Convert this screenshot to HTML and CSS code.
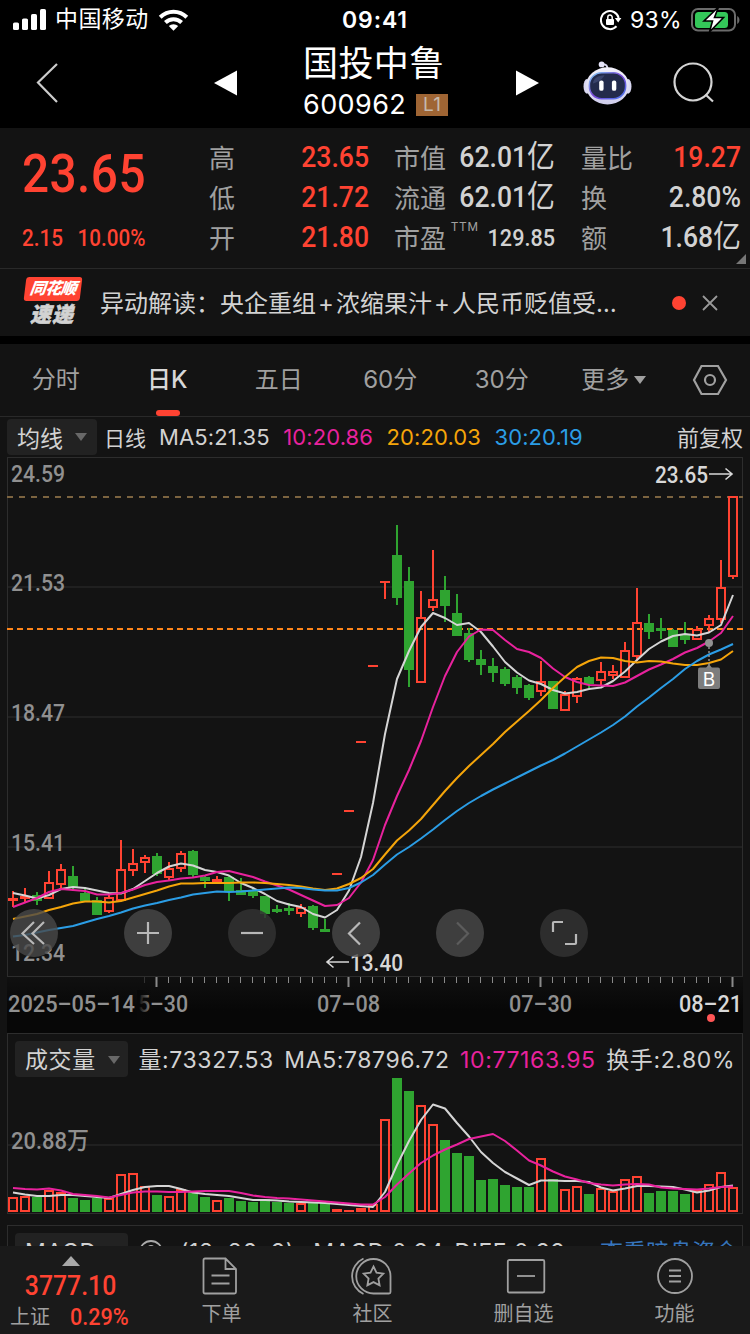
FILE: index.html
```
<!DOCTYPE html>
<html lang="zh-CN">
<head>
    <meta charset="UTF-8">
    <meta name="viewport" content="width=device-width, initial-scale=1.0">
    <title>国投中鲁 600962</title>
    <link rel="stylesheet" href="styles.css">
</head>
<body>
    <div class="status-bar">
        <div class="status-left">
            <svg width="34" height="22" viewBox="0 0 34 22" fill="#fff">
                <rect x="0" y="13.5" width="6" height="7.5" rx="1.6"/>
                <rect x="9" y="9.5" width="6" height="11.5" rx="1.6"/>
                <rect x="18" y="5" width="6" height="16" rx="1.6"/>
                <rect x="27" y="0" width="6" height="21" rx="1.6"/>
            </svg>
            <span class="carrier">中国移动</span>
            <svg width="31" height="22" viewBox="0 0 31 22" fill="none" stroke="#fff" stroke-width="4">
                <path d="M2.2 8.2a19 19 0 0 1 26.6 0"/>
                <path d="M7.4 13.5a11.6 11.6 0 0 1 16.2 0"/>
                <path d="M10.8 17.1a6.8 6.8 0 0 1 9.4 0L15.5 21.8z" fill="#fff" stroke="none"/>
            </svg>
        </div>
        <div class="time">09:41</div>
        <div class="status-right">
            <svg width="22" height="22" viewBox="0 0 22 22" fill="none" stroke="#fff" stroke-width="2">
                <path d="M16.5 17.3a9 9 0 1 1 2.2-8.3"/>
                <path d="M14.8 9h6.600l-3.200 4.500z" fill="#fff" stroke="none"/>
                <rect x="6" y="10" width="8" height="6" rx="1" fill="#fff" stroke="none"/>
                <path d="M7.8 10.5V8.300a2.200 2.200 0 0 1 4.400 0v2.200" stroke-width="1.5"/>
            </svg>
            <span class="battery-text">93%</span>
            <svg width="49" height="26" viewBox="0 0 49 26">
                <rect x="1" y="2" width="43" height="21.5" rx="6" fill="none" stroke="#6b6b6b" stroke-width="2"/>
                <path d="M46.2 9v8c3-2 3-6 0-8z" fill="#6b6b6b"/>
                <rect x="4" y="5" width="33" height="16" rx="3.5" fill="#34c759"/>
                <path d="M27.500 0L13 14h8.500L18.500 25 32.500 10.500h-9z" fill="#fff" stroke="#000" stroke-width="1.6"/>
            </svg>
        </div>
    </div>

    <div class="header">
        <svg class="back" width="24" height="42" viewBox="0 0 24 42" fill="none" stroke="#ccc" stroke-width="2.2">
            <path d="M21 2L2 20.500 21 40"/>
        </svg>
        <svg class="prev" width="24" height="26" viewBox="0 0 24 26" fill="#fff"><path d="M0 13L23 0.500V25.500z"/></svg>
        <div class="title">
            <h1>国投中鲁</h1>
            <div class="code">600962<span class="level">L1</span></div>
        </div>
        <svg class="next" width="24" height="26" viewBox="0 0 24 26" fill="#fff"><path d="M23 13L0 0.500V25.500z"/></svg>
        <svg class="robot" width="49" height="45" viewBox="0 0 50 46">
            <defs>
                <linearGradient id="shell" x1="0" y1="0" x2="0" y2="1">
                    <stop offset="0" stop-color="#f2f1fb"/>
                    <stop offset="1" stop-color="#cfcdec"/>
                </linearGradient>
                <linearGradient id="rim" x1="0" y1="0" x2="1" y2="1">
                    <stop offset="0" stop-color="#7fd0f5"/>
                    <stop offset="0.5" stop-color="#7a45d8"/>
                    <stop offset="1" stop-color="#4a7cf0"/>
                </linearGradient>
            </defs>
            <path d="M19 3.500c5-1 6 2 6 5" fill="none" stroke="#d9d8f0" stroke-width="2"/>
            <circle cx="19" cy="3.5" r="3" fill="#e4e3f7"/>
            <ellipse cx="4" cy="26" rx="3.5" ry="7.5" fill="#d9d8f2"/>
            <ellipse cx="46" cy="26" rx="3.5" ry="7.5" fill="#d9d8f2"/>
            <ellipse cx="25" cy="25.5" rx="22" ry="19" fill="url(#shell)"/>
            <rect x="6.5" y="12" width="37" height="26.5" rx="12.5" fill="#232b4c" stroke="url(#rim)" stroke-width="1.6"/>
            <path d="M10 23c1-6 5-8 12-8.500-3 5-7 7-12 8.500z" fill="#39436b"/>
            <rect x="16.5" y="20" width="4.5" height="10.5" rx="2" fill="#fff"/>
            <rect x="29.5" y="20" width="4.5" height="10.5" rx="2" fill="#fff"/>
        </svg>
        <svg class="search" width="42" height="42" viewBox="0 0 42 42" fill="none" stroke="#d4d4d4" stroke-width="2.2">
            <circle cx="20" cy="20" r="18.5"/>
            <path d="M32.500 32.500l7.500 7"/>
        </svg>
    </div>

    <div class="quote">
        <div class="price">
            <div class="last">23.65</div>
            <div class="change"><span>2.15</span><span>10.00%</span></div>
        </div>
        <dl class="stats stats-a">
            <dt>高</dt><dd class="up">23.65</dd>
            <dt>低</dt><dd class="up">21.72</dd>
            <dt>开</dt><dd class="up">21.80</dd>
        </dl>
        <dl class="stats stats-b">
            <dt>市值</dt><dd>62.01<b>亿</b></dd>
            <dt>流通</dt><dd>62.01<b>亿</b></dd>
            <dt>市盈<sup>TTM</sup></dt><dd class="small">129.85</dd>
        </dl>
        <dl class="stats stats-c">
            <dt>量比</dt><dd class="up">19.27</dd>
            <dt>换</dt><dd>2.80%</dd>
            <dt>额</dt><dd>1.68<b>亿</b></dd>
        </dl>
        <i class="corner"></i>
    </div>

    <div class="news">
        <div class="logo">
            <span class="logo-top">同花顺</span>
            <span class="logo-bottom">速递</span>
        </div>
        <p>异动解读：<span>央企重组<i>+</i>浓缩果汁<i>+</i>人民币贬值受…</span></p>
        <i class="dot"></i>
        <svg width="16" height="16" viewBox="0 0 16 16" stroke="#999" stroke-width="1.8"><path d="M1 1l14 14M15 1L1 15"/></svg>
    </div>

    <div class="tabs">
        <span>分时</span>
        <span class="active">日K</span>
        <span>五日</span>
        <span>60分</span>
        <span>30分</span>
        <span class="more">更多<i class="caret"></i></span>
        <span class="setting">
            <svg width="36" height="32" viewBox="0 0 36 32" fill="none" stroke="#a0a0a0" stroke-width="2.2">
                <path d="M9.500 2h16.500l8 14-8 14H9.500L2 16z"/>
                <circle cx="18" cy="16" r="5"/>
            </svg>
        </span>
    </div>

    <main>
        <div class="ma-row">
            <div class="select">均线<i class="caret"></i></div>
            <span class="period">日线</span>
            <span class="ma">MA5:21.35</span>
            <span class="ma pink">10:20.86</span>
            <span class="ma orange">20:20.03</span>
            <span class="ma blue">30:20.19</span>
            <span class="adjust">前复权</span>
        </div>

        <div class="kline">
            <svg id="kline" width="750" height="576" viewBox="0 457 750 576"></svg>
            <div class="controls">
                <button class="on"><svg width="48" height="48"><path d="M24 13L12.500 24.500 24 35M34 13L22.500 24.500 34 35"/></svg></button>
                <button class="on"><svg width="48" height="48"><path d="M24 13v22M13 24h22"/></svg></button>
                <button><svg width="48" height="48"><path d="M13 24h22"/></svg></button>
                <button class="on"><svg width="48" height="48"><path d="M28 13.500L17 24.500 28 35.500"/></svg></button>
                <button class="on disabled"><svg width="48" height="48"><path d="M21 13.500L32 24.500 21 35.500"/></svg></button>
                <button><svg width="48" height="48"><path d="M13 23V14q0-1 1-1h9M36 25v9q0 1-1 1H25"/></svg></button>
            </div>
        </div>

        <div class="panel">
            <div class="vol-row">
                <div class="select">成交量<i class="caret"></i></div>
                <span>量:73327.53</span>
                <span>MA5:78796.72</span>
                <span class="pink">10:77163.95</span>
                <span>换手:2.80%</span>
            </div>
            <svg id="volume" width="736" height="138" viewBox="7 1076 736 138"></svg>
        </div>

        <div class="panel macd">
            <div class="vol-row">
                <div class="select">MACD<i class="caret"></i></div>
                <svg width="24" height="26" viewBox="0 0 24 24" fill="none" stroke="#aaa" stroke-width="1.8">
                    <circle cx="12" cy="12" r="11"/>
                    <path d="M8 10a4 4 0 1 1 4 4v3"/>
                </svg>
                <span class="params">(12, 26, 9)</span>
                <span>MACD:0.94</span>
                <span>DIFF:0.99</span>
                <span class="link">查看暗盘资金</span>
            </div>
        </div>
    </main>

    <nav>
        <div class="index">
            <i class="caret-up"></i>
            <strong>3777.10</strong>
            <div><span>上证</span><em>0.29%</em></div>
        </div>
        <a class="order">
            <svg width="36" height="38" viewBox="0 0 36 38">
                <path d="M3 1.500h20.500L34 12v23q0 1.500-1.500 1.500H3Q1.500 36.500 1.500 35V3q0-1.500 1.500-1.500zM23.500 1.500V12H34M9.500 18.500h18M9.500 26.500h18"/>
            </svg>
            下单
        </a>
        <a class="social">
            <svg width="42" height="38" viewBox="0 0 42 38">
                <path d="M23.500 2a17 17 0 1 0 0 34.500H39q1.500 0 1.500-1.500V19A17 17 0 0 0 23.500 2zM13.500 1.500A19.500 19.500 0 0 0 13.500 37"/>
                <path d="M23.500 9.500l3 6.200 6.800 1-4.900 4.800 1.200 6.800-6.100-3.200-6.100 3.200 1.200-6.800-4.900-4.800 6.800-1z"/>
            </svg>
            社区
        </a>
        <a class="remove">
            <svg width="40" height="38" viewBox="0 0 40 38">
                <rect x="1.8" y="3" width="36.5" height="32.5" rx="1.5"/><path d="M11 19h18"/>
            </svg>
            删自选
        </a>
        <a class="tools">
            <svg width="38" height="38" viewBox="0 0 38 38">
                <circle cx="19" cy="19" r="17"/><path d="M13 13.500h12M13 19h12M13 24.500h12"/>
            </svg>
            功能
        </a>
    </nav>

    <script src="chart.js"></script>
</body>
</html>
```
FILE: styles.css
```
* {
    box-sizing: border-box;
}

body {
    margin: 0;
    width: 750px;
    height: 1334px;
    overflow: hidden;
    display: flex;
    flex-direction: column;
    background-color: #131313;
    color: #d2d2d2;
    font-family: Inter, "Noto Sans CJK SC", sans-serif;
    font-weight: 400;
}

svg {
    display: block;
    flex-shrink: 0;
}

i, em {
    font-style: normal;
}

.status-bar {
    height: 40px;
    flex-shrink: 0;
    display: grid;
    grid-template-columns: 1fr auto 1fr;
    align-items: center;
    padding: 0 10px 0 13px;
    background-color: #000;
    color: #fff;
}

.status-left, .status-right {
    display: flex;
    align-items: center;
}

.status-right {
    justify-content: flex-end;
}

.carrier {
    font-size: 23px;
    line-height: 34px;
    padding-bottom: 2px;
    margin: 0 9px 0 8px;
    letter-spacing: 0.4px;
}

.time {
    font-size: 23px;
    font-weight: 600;
    letter-spacing: 0.9px;
    padding-right: 3px;
}

.battery-text {
    font-size: 23px;
    margin: 0 9px 0 8px;
    letter-spacing: 0.3px;
}

.header {
    height: 88px;
    flex-shrink: 0;
    display: flex;
    align-items: center;
    padding: 0 35px 2px 36px;
    background-color: #000;
    color: #fff;
}

.prev {
    margin-left: 154px;
}

.title {
    width: 148px;
    margin-left: 65px;
    padding-top: 2px;
}

.title h1 {
    margin: 0;
    font-size: 35px;
    line-height: 42px;
    font-weight: 400;
    letter-spacing: 0.4px;
    white-space: nowrap;
}

.code {
    display: flex;
    align-items: center;
    font-size: 27px;
    line-height: 42px;
    letter-spacing: 0.4px;
}

.level {
    width: 32px;
    height: 22px;
    margin-left: 10px;
    background-color: #9f6534;
    color: #c5b9ad;
    font-size: 19px;
    line-height: 22px;
    text-align: center;
}

.next {
    margin-left: 67px;
}

.robot {
    margin-left: 43px;
}

.search {
    margin-left: 41px;
}

.quote {
    position: relative;
    height: 141px;
    flex-shrink: 0;
    display: flex;
    border-bottom: 1px solid #292929;
    font-family: Roboto, "Noto Sans CJK SC", sans-serif;
}

.price {
    width: 209px;
    padding: 14px 0 0 22px;
    color: #ff4332;
}

/* digits are set narrow, like a DIN face */
.last {
    font-size: 53px;
    font-weight: 500;
    line-height: 64px;
    letter-spacing: 0.5px;
    transform: scaleX(0.9);
    transform-origin: left;
}

.change {
    display: flex;
    gap: 17px;
    margin-top: 16px;
    font-size: 24px;
    font-weight: 500;
    line-height: 32px;
    transform: scaleX(0.86);
    transform-origin: left;
}

.stats {
    display: grid;
    grid-template-columns: auto 1fr;
    grid-auto-rows: 40px;
    align-items: center;
    margin: 9px 0 0;
    line-height: 40px;
}

.stats-a {
    width: 160px;
}

.stats-b {
    width: 161px;
    margin-left: 25px;
}

.stats-c {
    width: 160px;
    margin-left: 26px;
}

.stats dt {
    position: relative;
    padding-top: 3px;
    color: #a0a0a0;
    font-size: 26px;
}

.stats dd {
    margin: 0;
    text-align: right;
    font-size: 29.5px;
    font-weight: 500;
    white-space: nowrap;
    transform: scaleX(0.9);
    transform-origin: right;
}

.stats dd.up {
    color: #ff4332;
}

.stats dd.small {
    padding-top: 2px;
    font-size: 24px;
}

.stats b {
    font-size: 31px;
    font-weight: 400;
}

.stats sup {
    position: absolute;
    left: 57px;
    top: -9px;
    font-size: 12px;
    line-height: 40px;
    letter-spacing: 1px;
}

.corner {
    position: absolute;
    right: 4px;
    bottom: 4px;
    border-left: 10px solid transparent;
    border-bottom: 10px solid #777;
}

.news {
    height: 75px;
    flex-shrink: 0;
    display: flex;
    align-items: center;
    padding: 0 32px 0 24px;
    border-bottom: 8px solid #000;
}

.logo {
    width: 60px;
    font-weight: 900;
    font-style: italic;
}

.logo-top {
    display: block;
    width: 56px;
    height: 24px;
    margin-left: 1px;
    border-radius: 3px;
    transform: skewX(-7deg);
    background-color: #ff4332;
    color: #fff;
    font-size: 16px;
    line-height: 23px;
    letter-spacing: -0.6px;
    text-align: center;
}

.logo-bottom {
    display: block;
    margin-left: 6px;
    font-size: 21px;
    line-height: 27px;
    letter-spacing: 1px;
    -webkit-text-stroke: 0.6px #d2d2d2;
}

.news p {
    margin: 0 0 3px 16px;
    font-size: 24px;
    white-space: nowrap;
}

.news p i {
    display: inline-block;
    width: 20px;
    text-align: center;
}

.dot {
    width: 14px;
    height: 14px;
    margin: 0 16px 0 auto;
    border-radius: 50%;
    background-color: #ff4332;
}

.tabs {
    height: 73px;
    flex-shrink: 0;
    display: grid;
    grid-template-columns: repeat(5, 111.5px) 1fr 80px;
    align-items: stretch;
    border-bottom: 1px solid #292929;
    font-size: 24px;
    line-height: 72px;
    text-align: center;
    color: #a0a0a0;
}

.tabs .active {
    position: relative;
    color: #d8d8d8;
    font-weight: 500;
}

.tabs .active::after {
    content: "";
    position: absolute;
    left: 44px;
    bottom: 0;
    width: 24px;
    height: 6px;
    border-radius: 3px;
    background-color: #ff4332;
}

.caret {
    display: inline-block;
    border: 6px solid transparent;
    border-top: 8px solid #686868;
    border-bottom: 0;
}

.more .caret {
    margin-left: 5px;
    border-top-color: #a0a0a0;
    vertical-align: 4px;
}

.setting {
    display: flex;
    align-items: center;
    justify-content: center;
}

main {
    flex: 1;
    min-height: 0;
    overflow: hidden;
}

.ma-row {
    height: 40px;
    display: flex;
    align-items: center;
    padding: 0 7px 0 7px;
    font-size: 22px;
    white-space: nowrap;
}

.select {
    display: flex;
    align-items: center;
    height: 36px;
    padding: 0 10px;
    border-radius: 4px;
    background-color: #222;
    font-size: 23px;
}

.select .caret {
    margin-left: auto;
}

.ma-row .select {
    width: 90px;
}

.period {
    margin: 0 13px 0 7px;
    font-size: 21px;
}

.ma {
    margin-right: 13.5px;
    letter-spacing: 0.1px;
}

.adjust {
    margin-left: auto;
    padding-bottom: 3px;
}

.pink {
    color: #e8229d;
}

.orange {
    color: #f5a50a;
}

.blue {
    color: #2b9de5;
}

.kline {
    position: relative;
}

.controls {
    position: absolute;
    left: 10px;
    top: 452px;
    display: flex;
    gap: 56px;
}

.controls button {
    width: 48px;
    height: 48px;
    padding: 0;
    border: 0;
    border-radius: 50%;
    background-color: rgba(50, 50, 50, 0.85);
}

.controls button.on {
    background-color: rgba(74, 74, 74, 0.8);
}

.controls button:first-child {
    margin-right: 10px;
}

.controls path {
    fill: none;
    stroke: #b8b8b8;
    stroke-width: 2.2;
}

.controls .disabled path {
    stroke: #5c5c5c;
}

.panel {
    width: 736px;
    height: 181px;
    margin-left: 7px;
    border: 1px solid #2d2d2d;
}

.panel #volume {
    margin-left: -1px;
}

.vol-row {
    display: flex;
    align-items: center;
    height: 42px;
    padding: 8px 0 0 7px;
    gap: 10.5px;
    font-size: 23px;
    line-height: 34px;
    letter-spacing: 0.6px;
    white-space: nowrap;
}

.vol-row > * {
    padding-top: 2px;
}

.vol-row .select {
    width: 113px;
    padding-right: 8px;
}

.macd {
    margin-top: 11px;
}

.macd .params {
    margin: 0 8px 0 7px;
}

.macd .link {
    margin-left: auto;
    padding-right: 4px;
    letter-spacing: 0;
    color: #3674bb;
}

nav {
    height: 88px;
    flex-shrink: 0;
    display: flex;
    background-color: #1a1a1a;
    color: #a0a0a0;
    font-size: 20px;
}

nav .index {
    width: 146px;
    padding: 10px 5px 0 0;
    display: flex;
    flex-direction: column;
    align-items: center;
    font-family: Roboto, "Noto Sans CJK SC", sans-serif;
}

.caret-up {
    border: 9px solid transparent;
    border-bottom: 10px solid #a8a8a8;
    border-top: 0;
}

nav strong {
    color: #ff4332;
    font-size: 28.5px;
    font-weight: 500;
    line-height: 40px;
    transform: scaleX(0.87);
}

nav .index div {
    display: flex;
    gap: 20px;
    line-height: 23px;
}

nav em {
    width: 61px;
    color: #ff4332;
    font-size: 24px;
    font-weight: 500;
    transform: scaleX(0.9);
    transform-origin: left;
}

nav a {
    flex: 1;
    display: flex;
    flex-direction: column;
    align-items: center;
    padding-top: 11px;
    line-height: 39px;
}

nav a svg {
    fill: none;
    stroke: #a0a0a0;
    stroke-width: 1.8;
}

.order svg {
    margin-right: 3px;
}

.social svg {
    margin-right: 4px;
}

.remove svg {
    margin-left: 4px;
}

.chart-num {
    font-family: Roboto, "Noto Sans CJK SC", sans-serif;
    font-size: 24px;
    font-weight: 500;
}
```
FILE: chart.js
```
const UP = '#ff4332';
const DOWN = '#2fa430';

// type, high, body top, body bottom, low
const candles = [
    ['f', 891, 898, 901, 907], ['f', 888, 896, 899, 903], ['g', 892, 895, 901, 905], ['r', 871, 882, 899, 899],
    ['r', 864, 869, 885, 888], ['g', 866, 876, 887, 890], ['g', 887, 893, 901, 901], ['g', 897, 900, 915, 915],
    ['r', 895, 897, 912, 913], ['r', 840, 869, 901, 901], ['r', 849, 863, 871, 876], ['r', 855, 857, 863, 873],
    ['g', 853, 856, 874, 876], ['r', 862, 868, 878, 880], ['r', 851, 853, 869, 872], ['g', 850, 851, 875, 877],
    ['g', 875, 877, 881, 888], ['f', 876, 879, 882, 883], ['g', 875, 877, 891, 901], ['g', 878, 890, 895, 895],
    ['g', 888, 890, 896, 898], ['g', 896, 896, 914, 918], ['g', 905, 909, 912, 913], ['g', 903, 908, 911, 915],
    ['r', 904, 907, 914, 917], ['g', 905, 906, 928, 930], ['g', 919, 929, 932, 932], ['f', 873, 873, 875, 875],
    ['f', 810, 810, 812, 812], ['f', 741, 741, 743, 743], ['f', 665, 665, 667, 667], ['f', 581, 581, 583, 599],
    ['g', 525, 555, 598, 605], ['g', 567, 581, 670, 687], ['r', 591, 617, 683, 683], ['r', 550, 599, 608, 611],
    ['g', 576, 590, 606, 622], ['g', 594, 613, 636, 636], ['g', 628, 633, 660, 662], ['g', 650, 659, 665, 675],
    ['g', 658, 666, 673, 682], ['g', 667, 669, 684, 686], ['g', 675, 677, 688, 694], ['g', 684, 685, 698, 700],
    ['r', 661, 681, 692, 696], ['g', 681, 681, 709, 709], ['r', 691, 694, 711, 711], ['r', 677, 678, 697, 703],
    ['g', 676, 677, 684, 688], ['r', 662, 671, 681, 685], ['r', 665, 671, 676, 679], ['r', 642, 650, 678, 678],
    ['r', 588, 622, 657, 661], ['g', 614, 623, 632, 639], ['g', 618, 628, 631, 639], ['g', 629, 630, 647, 647],
    ['g', 622, 634, 640, 644], ['r', 626, 629, 640, 640], ['r', 615, 618, 626, 633], ['r', 560, 587, 620, 623],
    ['r', 496, 496, 577, 579]
];

const ma5 = [893, 895.5, 898.5, 895, 889, 887, 888, 890.5, 893, 893.5, 889, 881, 873, 866.5, 863.5, 865.5, 870, 872, 875.5, 883,
    888, 894, 901, 904.5, 907, 914, 917.5, 910, 890.5, 857, 803, 734, 679, 651, 627, 613, 618, 625, 623, 632,
    646.5, 662, 672.5, 680.5, 684, 690, 693.5, 692, 689, 687.5, 681, 671.5, 660, 649, 641.5, 636, 634, 635.5, 632.5, 625, 595];
const ma10 = [907, 902.5, 898, 892, 889, 890, 891, 894.5, 894.5, 893, 889.5, 885, 882, 880.5, 878.5, 877.5, 875.5, 872, 871, 874,
    877, 881.5, 885.5, 889.5, 895, 900.5, 906, 905, 898, 882.5, 860, 825, 796, 770, 741, 707, 676, 652, 636.5, 629.5,
    630, 640, 649, 652, 658, 668.5, 677, 682, 685, 685.5, 686, 682.5, 676, 669.5, 664.5, 659, 652.5, 648, 641.5, 633, 616];
const ma20 = [919, 916.5, 914, 910, 907, 903.5, 901.5, 901.5, 902.5, 901, 897.5, 894, 890.5, 886.5, 883.5, 883.5, 883, 883, 883, 882.5,
    882.5, 883, 884, 885, 886.5, 888.5, 890, 888.5, 884, 878, 869, 854.5, 840.5, 830.5, 819, 805, 791, 778, 766, 755,
    744, 732, 721.5, 711, 700, 688, 677, 667, 661, 657.5, 658, 661, 662.5, 661, 661.5, 663.5, 665, 665, 663, 659.5, 651];
const ma30 = [936.5, 935, 932.5, 930, 928, 926, 922.5, 919, 916, 912.5, 908.5, 905.5, 903, 900, 897.5, 894.5, 893, 891.5, 892, 891.5,
    890.5, 889.5, 888.5, 887.5, 888, 889.5, 890.5, 890.5, 888, 882.5, 875, 864.5, 854.5, 847, 838.5, 829.5, 820, 811, 803, 796,
    789.5, 783.5, 777.5, 771.5, 765.5, 760, 753.5, 746.5, 739.5, 732.5, 725, 716.5, 706.5, 697.5, 688, 679, 669, 661, 654.5, 649.5, 644];

const volumes = [1197, 1196, 1197, 1190, 1192, 1198, 1200, 1198, 1198, 1174, 1173, 1186, 1195, 1196, 1189, 1191, 1197, 1200, 1198, 1201,
    1202, 1199, 1202, 1203, 1203, 1203, 1203, 1209, 1210, 1208, 1204, 1119, 1078, 1091, 1105, 1124, 1140, 1153, 1156, 1180,
    1179, 1185, 1187, 1187, 1158, 1179, 1189, 1186, 1194, 1188, 1191, 1179, 1176, 1193, 1191, 1191, 1194, 1190, 1184, 1172, 1187];
const volMa5 = [1192.5, 1194.5, 1196, 1196, 1195, 1195, 1196, 1197, 1198, 1194, 1190, 1187, 1186, 1186, 1189, 1192.5, 1194, 1195, 1196, 1198,
    1200, 1200, 1200.5, 1201.5, 1202, 1202.5, 1203, 1204, 1205, 1206, 1207, 1192, 1165, 1141, 1120, 1104.5, 1108.5, 1123, 1136.5, 1152,
    1163, 1172, 1178.5, 1185, 1180.5, 1180.5, 1181, 1181, 1182, 1187.5, 1190.5, 1188.5, 1186, 1186, 1186.5, 1187, 1189.5, 1192.5, 1190.5, 1187, 1185.5];
const volMa10 = [1188, 1189, 1189.5, 1188.5, 1190.5, 1194, 1195, 1196, 1197.5, 1195, 1192.5, 1191.5, 1191.5, 1192, 1192, 1191.5, 1191, 1191, 1191, 1193,
    1195.5, 1197, 1198, 1198.5, 1199.5, 1200.5, 1201.5, 1202.5, 1203.5, 1204.5, 1204.5, 1197, 1184.5, 1173.5, 1163, 1155.5, 1149.5, 1144.5, 1139, 1136.5,
    1134, 1141, 1150.5, 1160.5, 1165.5, 1171.5, 1176.5, 1179.5, 1183, 1184.5, 1185.5, 1184.5, 1184, 1184.5, 1187.5, 1188.5, 1189, 1189.5, 1188.5, 1187, 1186.5];

const xAt = (i) => 13 + i * 12;

function rect(x, y, w, h, fill) {
    return `<rect x="${x}" y="${y}" width="${w}" height="${h}" fill="${fill}"/>`;
}

function bar(x, top, bottom, type) {
    if (type === 'r' && bottom - top > 3) {
        return `<rect x="${x - 4}" y="${top + 1}" width="8" height="${bottom - top - 2}" fill="none" stroke="${UP}" stroke-width="2"/>`;
    }
    return rect(x - 5, top, 10, bottom - top, type === 'g' ? DOWN : UP);
}

function line(values, color) {
    const points = values.map((y, i) => `${xAt(i)},${y}`).join(' ');
    return `<polyline points="${points}" fill="none" stroke="${color}" stroke-width="2" stroke-linejoin="round"/>`;
}

function label(text, x, y, width, color) {
    return `<text class="chart-num" x="${x}" y="${y}" textLength="${width}" lengthAdjust="spacingAndGlyphs" fill="${color}">${text}</text>`;
}

function drawKline() {
    let out = rect(7, 977, 736, 56, 'url(#axisBg)');
    out += '<defs><linearGradient id="axisBg" x1="0" y1="0" x2="0" y2="1"><stop offset="0" stop-color="#101010"/><stop offset="0.6" stop-color="#070707"/></linearGradient>' +
        '<linearGradient id="fade"><stop offset="0.1" stop-color="#080808"/><stop offset="1" stop-color="#080808" stop-opacity="0"/></linearGradient></defs>';
    out += '<rect x="7.5" y="457.5" width="735" height="519" fill="none" stroke="#2d2d2d"/>';
    [587, 717, 847].forEach((y) => { out += rect(8, y - 1, 734, 2, '#202020'); });
    out += '<path d="M7 497H743" stroke="#7c6440" stroke-width="1.8" stroke-dasharray="6 6"/>';
    out += '<path d="M7 629H743" stroke="#ff8519" stroke-width="2" stroke-dasharray="6 4"/>';

    candles.forEach(([type, high, top, bottom, low], i) => {
        const x = xAt(i);
        const color = type === 'g' ? DOWN : UP;
        if (top > high) out += rect(x - 1, high, 2, top - high, color);
        if (low > bottom) out += rect(x - 1, bottom, 2, low - bottom, color);
        out += bar(x, top, bottom, type);
    });

    out += line(ma5, '#d5d5d5') + line(ma10, '#e8229d') + line(ma20, '#f5a50a') + line(ma30, '#2b9de5');

    // buy marker
    out += '<circle cx="709" cy="643" r="4" fill="#929292"/>';
    out += '<path d="M709 647V665" stroke="#929292" stroke-width="1.5" stroke-dasharray="2 2"/>';
    out += '<path d="M709 664l3 4h-6z" fill="#858585"/><rect x="698" y="667.5" width="22" height="21.5" rx="2" fill="#7d7d7d"/>';
    out += '<text x="709" y="685.5" text-anchor="middle" font-size="19" fill="#fff">B</text>';

    out += label('24.59', 11, 481.5, 54, '#909090');
    out += label('21.53', 11, 591, 54, '#909090');
    out += label('18.47', 11, 721, 54, '#909090');
    out += label('15.41', 11, 851, 54, '#909090');
    out += label('12.34', 11, 961, 54, '#909090');
    out += label('23.65', 655, 482.5, 53, '#d8d8d8');
    out += '<path d="M709 474H732M725.5 468.5L732 474 725.5 479.5" fill="none" stroke="#d8d8d8" stroke-width="1.6"/>';
    out += label('13.40', 350, 970.5, 53, '#d8d8d8');
    out += '<path d="M349 962H327M333.5 956.5L327 962 333.5 967.5" fill="none" stroke="#d8d8d8" stroke-width="1.6"/>';

    // time axis
    for (let i = 11; i <= 60; i++) {
        const major = (i - 12) % 16 === 0;
        out += major ? rect(xAt(i) - 1.5, 977, 2, 10, '#8a8a8a') : rect(xAt(i) - 1, 977, 1, 6, i === 11 ? '#333' : '#8a8a8a');
    }
    out += label('5–30', 138, 1012, 50, '#909090');
    out += rect(137, 990, 15, 30, 'url(#fade)');
    out += label('2025–05–14', 8, 1012, 127, '#909090');
    out += label('07–08', 317, 1012, 63, '#909090');
    out += label('07–30', 509, 1012, 63, '#909090');
    out += label('08–21', 679, 1012, 63, '#d8d8d8');
    out += '<circle cx="711" cy="1018" r="4" fill="#ff5656"/>';
    document.getElementById('kline').innerHTML = out;
}

function drawVolume() {
    let out = rect(8, 1144, 734, 2, '#202020');
    volumes.forEach((top, i) => {
        out += bar(xAt(i), top, 1212, candles[i][0] === 'g' ? 'g' : 'r');
    });
    out += line(volMa5, '#d5d5d5') + line(volMa10, '#e8229d');
    out += label('20.88万', 11, 1149, 78, '#909090');
    document.getElementById('volume').innerHTML = out;
}

drawKline();
drawVolume();
```
